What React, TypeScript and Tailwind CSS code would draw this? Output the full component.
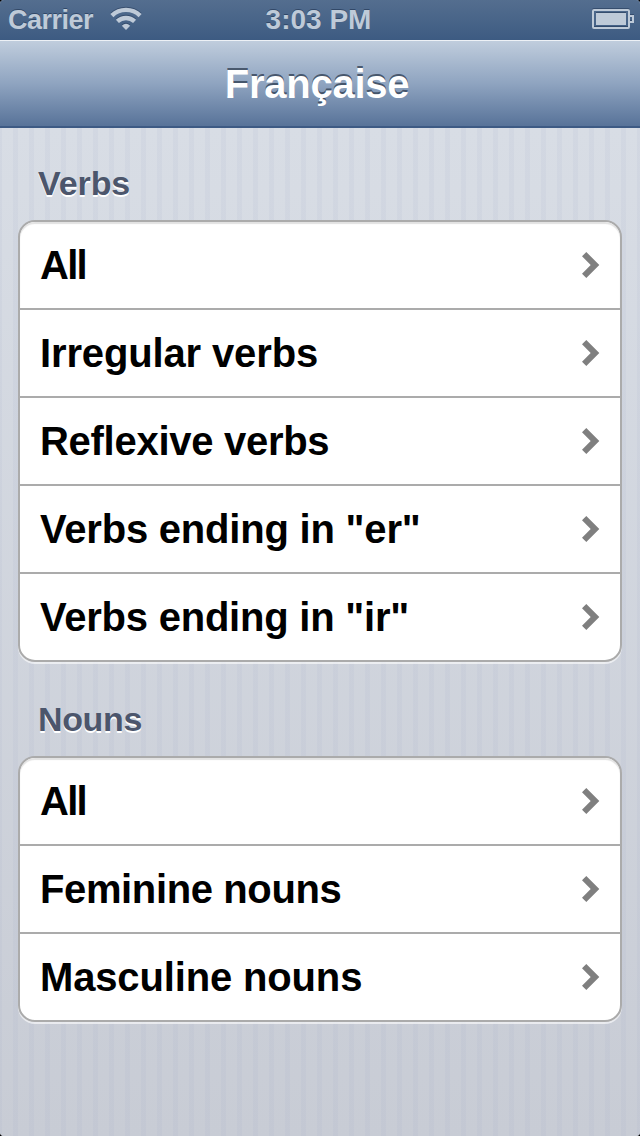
type Row = { label: string; tracking: string };

const verbs: Row[] = [
  { label: 'All', tracking: 'tracking-[-1.7px]' },
  { label: 'Irregular verbs', tracking: 'tracking-[-0.14px]' },
  { label: 'Reflexive verbs', tracking: 'tracking-[-0.28px]' },
  { label: 'Verbs ending in "er"', tracking: 'tracking-[-0.21px]' },
  { label: 'Verbs ending in "ir"', tracking: 'tracking-[-0.23px]' },
];

const nouns: Row[] = [
  { label: 'All', tracking: 'tracking-[-1.7px]' },
  { label: 'Feminine nouns', tracking: 'tracking-[-0.38px]' },
  { label: 'Masculine nouns', tracking: 'tracking-[-0.15px]' },
];

function Chevron() {
  return (
    <svg width="18" height="26" viewBox="0 0 18 26" aria-hidden="true">
      <path d="M4.3 0 L17.3 13 L4.3 26 L0 21.7 L8.7 13 L0 4.3 Z" fill="#7f7f7f" />
    </svg>
  );
}

function Wifi() {
  return (
    <svg
      className="ml-[17px] drop-shadow-[0_-1px_0_rgba(30,50,80,0.5)]"
      width="32"
      height="24"
      viewBox="0 0 32 24"
      fill="none"
      stroke="#becad8"
      strokeWidth="4.4"
      aria-hidden="true"
    >
      <path d="M1.9 8.6 A20.3 20.3 0 0 1 30.1 8.6" />
      <path d="M7.4 14.4 A12.6 12.6 0 0 1 24.6 14.4" />
      <path d="M11.8 18.8 Q16 14.6 20.2 18.8 L16 23 Z" fill="#becad8" stroke="none" />
    </svg>
  );
}

function Battery() {
  return (
    <svg
      className="drop-shadow-[0_-1px_0_rgba(30,50,80,0.5)]"
      width="42"
      height="20"
      viewBox="0 0 42 20"
      aria-hidden="true"
    >
      <rect x="1" y="1" width="36" height="18" rx="1" fill="none" stroke="#becad8" strokeWidth="2" />
      <rect x="4" y="4" width="30" height="12" fill="#becad8" />
      <path d="M38 7 H41 V13 H38" fill="none" stroke="#becad8" strokeWidth="2" />
    </svg>
  );
}

function Group({ title, tracking, rows }: { title: string; tracking: string; rows: Row[] }) {
  return (
    <section>
      <h2
        className={`mb-[10px] h-[54px] pl-5 text-[34px] leading-[55px] font-bold text-[#4c566c] [text-shadow:0_2px_0_#fff] ${tracking}`}
      >
        {title}
      </h2>
      <ul className="overflow-hidden rounded-[17px] border-2 border-[#ababab] bg-white shadow-[0_2px_0_rgba(255,255,255,0.6)]">
        {rows.map((row, i) => (
          <li
            key={row.label}
            className={
              i === 0
                ? 'flex h-[86px] items-center justify-between rounded-t-[15px] pr-5 pl-5 shadow-[inset_0_2px_1px_#e2e2e2]'
                : 'flex h-[88px] items-center justify-between border-t-2 border-[#ababab] pr-5 pl-5'
            }
          >
            <span className={`text-[40px] leading-[48px] font-bold whitespace-nowrap text-black ${row.tracking}`}>
              {row.label}
            </span>
            <Chevron />
          </li>
        ))}
      </ul>
    </section>
  );
}

export default function App() {
  return (
    <div className="h-[1136px] w-[640px] overflow-hidden bg-black font-['Liberation_Sans',Arial,sans-serif]">
      <div className="flex h-full flex-col overflow-hidden rounded-[4px] bg-[#c8ccd5]">
        <header className="grid h-10 shrink-0 grid-cols-[1fr_auto_1fr] items-center bg-linear-to-b from-[#546e8f] to-[#3d5b82] pb-[2px] text-[28px] leading-none font-bold text-[#becad8] [text-shadow:0_-1px_0_rgba(30,50,80,0.6)]">
          <div className="flex items-center pl-2">
            <span className="pt-[2px] text-[27px] tracking-[-0.5px]">Carrier</span>
            <Wifi />
          </div>
          <span className="pt-[2px] pr-[3px]">3:03 PM</span>
          <div className="flex justify-end pr-[6px]">
            <Battery />
          </div>
        </header>
        <nav className="flex h-[88px] shrink-0 items-center justify-center border-t border-b-2 border-t-[#edf1f6] border-b-[#3d5a84] bg-linear-to-b from-[#c0cddd] via-[#8fa4c0] to-[#587399] pr-[6px]">
          <h1 className="text-[40px] leading-[48px] font-bold tracking-[-0.25px] text-white [text-shadow:0_-2px_0_rgba(50,65,85,0.8)]">
            Française
          </h1>
        </nav>
        <main className="flex grow flex-col gap-[30px] bg-[repeating-linear-gradient(90deg,rgba(150,160,195,0.09)_0_2px,transparent_2px_13px,rgba(150,160,195,0.09)_13px_16px),linear-gradient(#d8dde5,#c8ccd5)] px-[18px] pt-[28px]">
          <Group title="Verbs" tracking="tracking-[-0.1px]" rows={verbs} />
          <Group title="Nouns" tracking="tracking-[-0.35px]" rows={nouns} />
        </main>
      </div>
    </div>
  );
}
